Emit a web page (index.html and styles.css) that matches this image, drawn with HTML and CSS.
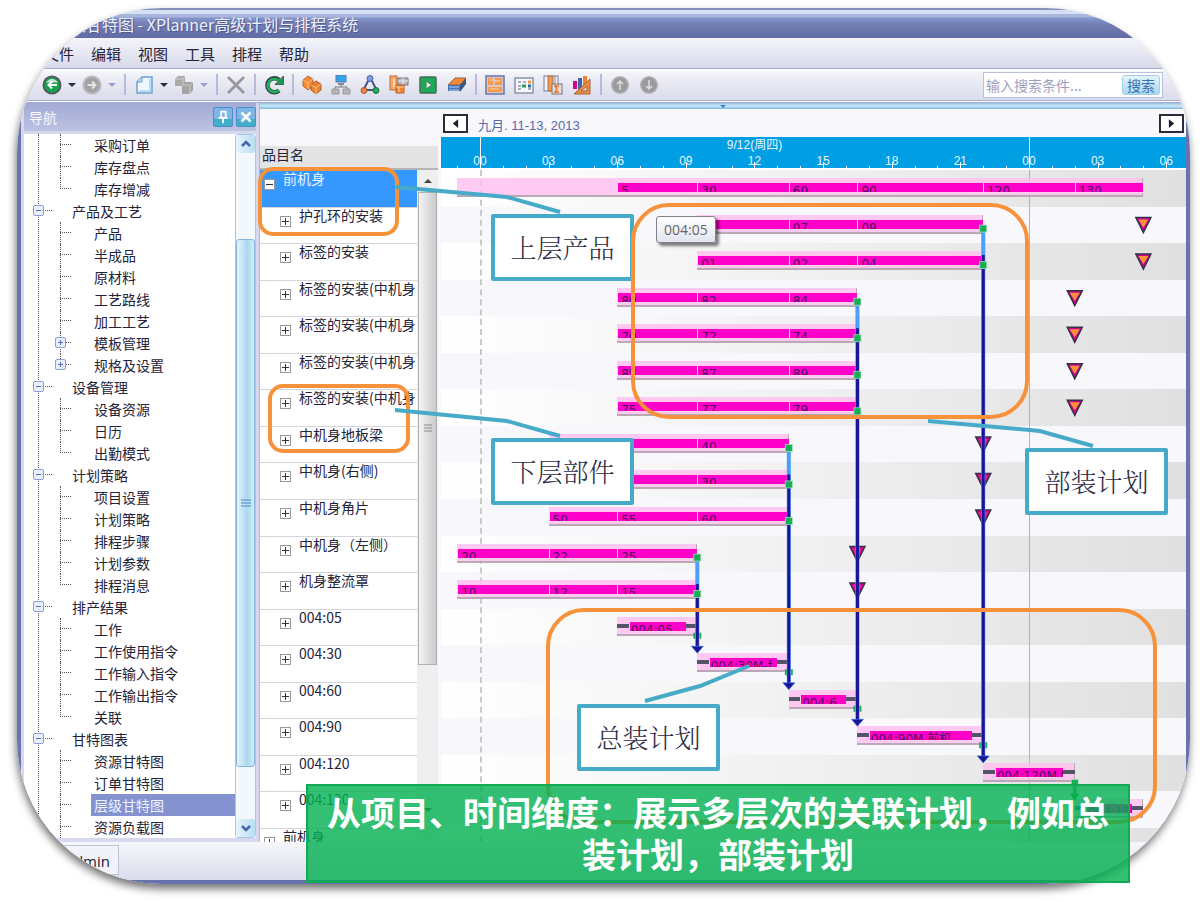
FILE: index.html
```html
<!DOCTYPE html>
<html lang="zh-CN">
<head>
<meta charset="utf-8">
<title>层级甘特图 - XPlanner高级计划与排程系统</title>
<link rel="stylesheet" href="styles.css">
</head>
<body>
<main class="slide">
  <div class="window">
    <header class="titlebar">层级甘特图 - XPlanner高级计划与排程系统</header>
    <nav class="menubar" aria-label="主菜单">
      <button class="menu">文件</button><button class="menu">编辑</button><button class="menu">视图</button><button class="menu">工具</button><button class="menu">排程</button><button class="menu">帮助</button>
    </nav>
    <div class="toolbar">
      <div class="group tight">
        <button class="tool" aria-label="后退"><svg viewBox="0 0 20 20"><circle cx="10" cy="10" r="9.5" fill="#555b63"/><circle cx="10" cy="10" r="7.500" fill="#12a34c"/><path d="M4 7.500Q10 0 16 7.500z" fill="#c6dfcf"/><path d="M15 10H7M10 6.500 6.500 10 10 13.500" fill="none" stroke="#fff" stroke-width="2"/></svg></button>
        <button class="drop" aria-label="后退列表"></button>
        <button class="tool" aria-label="前进"><svg viewBox="0 0 20 20"><circle cx="10" cy="10" r="9.500" fill="#b9b9bd"/><circle cx="10" cy="10" r="7.500" fill="#a2a2a6"/><path d="M5.500 10H13M10 6.500 13.500 10 10 13.500" fill="none" stroke="#e4e4e6" stroke-width="2"/></svg></button>
        <button class="drop dim" aria-label="前进列表"></button>
      </div>
      <i class="sep"></i>
      <div class="group tight">
        <button class="tool" aria-label="新建"><svg viewBox="0 0 20 20"><path d="M8 2h10v16H3V7z" fill="#eef7fd" stroke="#6e9fd4" stroke-width="1.500"/><path d="M8 2v5H3" fill="#b9dcf2" stroke="#6e9fd4"/><path d="M16 4v12H5" fill="none" stroke="#a9d5ee" stroke-width="1.500"/></svg></button>
        <button class="drop" aria-label="新建列表"></button>
        <button class="tool" aria-label="复制"><svg viewBox="0 0 20 20"><path d="M1 4l3-3h7v7l-2 3H1z" fill="#aaa"/><path d="M1 4h8v7M9 4l2-3" fill="none" stroke="#ccc"/><path d="M8 10l3-3h8v8l-3 4H8z" fill="#a4a4a4"/><path d="M8 10h8v9M16 10l3-3" fill="none" stroke="#ccc"/></svg></button>
        <button class="drop dim" aria-label="复制列表"></button>
      </div>
      <i class="sep"></i>
      <button class="tool" aria-label="删除"><svg viewBox="0 0 20 20"><path d="M2 2 18 18M18 2 2 18" stroke="#98989c" stroke-width="2.800"/></svg></button>
      <i class="sep"></i>
      <button class="tool" aria-label="刷新"><svg viewBox="0 0 20 20"><path d="M15 15.500A7 7 0 1 1 15 5" fill="none" stroke="#38464c" stroke-width="4.500"/><path d="M19.500 1v8.500H11z" fill="#1d9b50" stroke="#38464c" stroke-width=".8"/><path d="M15 15A6.500 6.500 0 1 1 14.500 5.500" fill="none" stroke="#1fae5a" stroke-width="2.600"/></svg></button>
      <i class="sep"></i>
      <div class="group">
        <button class="tool" aria-label="品目"><svg viewBox="0 0 20 20"><path d="M1 5 6 1l5 3v7l-5 4-5-4z" fill="#f58a33" stroke="#b46a38"/><path d="M1 5l5 3 5-4M6 8v6" fill="none" stroke="#fbc08a"/><path d="M9 10l5-4 5 3v6l-5 4-5-4z" fill="#f0812c" stroke="#a8602f"/><path d="M9 10l5 3 5-4M14 13v6" fill="none" stroke="#fbc08a"/></svg></button>
        <button class="tool" aria-label="工艺"><svg viewBox="0 0 20 20"><path d="M10 8v4M4 15v-3h12v3" fill="none" stroke="#777"/><rect x="5" y="0" width="10" height="7" fill="#32a1ee" stroke="#5d7ba5"/><path d="M7 9h6" stroke="#888" stroke-width="2"/><path d="M1 14h7v5H1zM12 14h7v5h-7z" fill="#b5b5b8" stroke="#999"/></svg></button>
        <button class="tool" aria-label="资源"><svg viewBox="0 0 20 20"><path d="M9 4 4 14M11 4l5 10M5 15h10" stroke="#475682" stroke-width="2"/><circle cx="10" cy="3.500" r="3" fill="#7c9ddd" stroke="#4a66a8"/><circle cx="4" cy="15.500" r="3" fill="#ee8240" stroke="#a65930"/><circle cx="16" cy="15.500" r="3" fill="#22aa58" stroke="#27704a"/></svg></button>
        <button class="tool" aria-label="订单"><svg viewBox="0 0 20 20"><rect x="1" y="1" width="7" height="14" fill="#f8a868" stroke="#b56c3c"/><path d="M5 4v8" stroke="#fff"/><path d="M9 3h10v7H9z" fill="#b8b8bd" stroke="#777"/><path d="M9 6h10M14 3v7" stroke="#eee"/><path d="M7 10h8v8H7z" fill="#f28730" stroke="#ad622e"/><path d="M10 12v5M7 12h8" stroke="#fbd0a0"/></svg></button>
        <button class="tool" aria-label="执行"><svg viewBox="0 0 20 20"><rect x="2" y="2" width="16" height="16" rx="1" fill="#1dab57" stroke="#44695a" stroke-width="1.500"/><path d="M8 6v8l6-4z" fill="#d6eedd" stroke="#45795d"/></svg></button>
        <button class="tool" aria-label="报表"><svg viewBox="0 0 20 20"><path d="M8 3h11l-6 7H1z" fill="#f28a38" stroke="#9d633f"/><path d="M1 10h12v6H1z" fill="#3f72ba"/><path d="M13 10l6-7v6l-6 8z" fill="#3d5681"/><path d="M2 12h10M2 15h10" stroke="#b9d6f0"/></svg></button>
      </div>
      <i class="sep"></i>
      <div class="group">
        <button class="tool" aria-label="资源甘特图"><svg viewBox="0 0 20 20"><rect x="1" y="1" width="18" height="18" fill="#dcc7c6" stroke="#6378ad" stroke-width="1.500"/><path d="M3 3h5v7H3zM10 3h7v7h-7zM3 12h14v5H3z" fill="#f69a4b"/><path d="M5 5h3M10 6h5M5 14h9" stroke="#ffd8b5"/></svg></button>
        <button class="tool" aria-label="日程表"><svg viewBox="0 0 20 20"><rect x="1" y="3" width="18" height="15" fill="#f7f7fb" stroke="#8893ab" stroke-width="1.500"/><path d="M4 7h3M9 7h3M4 11h3M14 14h3M4 14h3" stroke="#a8adbb" stroke-width="2"/><path d="M14 7h3" stroke="#f19142" stroke-width="3"/><path d="M8 11h4" stroke="#28a15c" stroke-width="3"/><path d="M14 11h3" stroke="#276f90" stroke-width="3"/></svg></button>
        <button class="tool" aria-label="汇总"><svg viewBox="0 0 20 20"><rect x="1" y="1" width="14" height="15" fill="#f5f3f5" stroke="#777d95"/><path d="M5 1h5v15H5z" fill="#f19852" stroke="#ad7048"/><path d="M12 1v8" stroke="#7b87a0"/><rect x="9" y="9" width="10" height="10" fill="#e9dde1" stroke="#777"/><path d="M16 11h-4l2 3-2 3h4" fill="none" stroke="#ec7322" stroke-width="1.500"/></svg></button>
        <button class="tool" aria-label="分析"><svg viewBox="0 0 20 20"><path d="M1 6h4v8H1z" fill="#d6008f"/><path d="M6 3h4v12H6z" fill="#4063ad"/><path d="M11 1h4v10h-4z" fill="#f28430"/><path d="M18 4v15H2z" fill="#f08b3f" stroke="#a26342"/><path d="M15 11v5h-6z" fill="#ddd9e6" stroke="#936647"/></svg></button>
      </div>
      <i class="sep"></i>
      <div class="group">
        <button class="tool" aria-label="上移"><svg viewBox="0 0 20 20"><circle cx="10" cy="10" r="9" fill="#b1b1b3"/><circle cx="10" cy="10" r="7.500" fill="#9b9b9e"/><path d="M10 15V6M7 9l3-3 3 3" fill="none" stroke="#dedee0" stroke-width="1.500"/></svg></button>
        <button class="tool" aria-label="下移"><svg viewBox="0 0 20 20"><circle cx="10" cy="10" r="9" fill="#b1b1b3"/><circle cx="10" cy="10" r="7.500" fill="#9b9b9e"/><path d="M10 5v9M7 11l3 3 3-3" fill="none" stroke="#dedee0" stroke-width="1.500"/></svg></button>
      </div>
      <form class="search">
        <input class="search-box" type="text" placeholder="输入搜索条件..." aria-label="搜索条件">
        <button class="search-go" type="button">搜索</button>
      </form>
    </div>

    <div class="workspace">
      <aside class="navpane">
        <div class="navhead">
          <span class="navtitle">导航</span>
          <button class="navbtn" aria-label="固定"><svg viewBox="0 0 20 20"><path d="M7 4h7M8 4v7M13 4v7M5 11h10M10 11v6" fill="none" stroke="#fff" stroke-width="2"/></svg></button>
          <button class="navbtn" aria-label="关闭"><svg viewBox="0 0 20 20"><path d="M5 5l10 10M15 5 5 15" stroke="#fff" stroke-width="3"/></svg></button>
        </div>
        <div class="treebox">
          <ul class="tree" id="nav-tree"></ul>
          <div class="treescroll">
            <button class="scrollbtn" aria-label="向上滚动"><svg viewBox="0 0 12 12"><path d="M2 8l4-4 4 4" fill="none" stroke="#4766b0" stroke-width="2.500"/></svg></button>
            <div class="treethumb"><svg viewBox="0 0 10 8"><path d="M0 1h10M0 4h10M0 7h10" stroke="#4e83cc"/></svg></div>
            <button class="scrollbtn" aria-label="向下滚动"><svg viewBox="0 0 12 12"><path d="M2 4l4 4 4-4" fill="none" stroke="#4766b0" stroke-width="2.500"/></svg></button>
          </div>
        </div>
      </aside>

      <section class="content">
        <div class="splitter"><svg viewBox="0 0 8 4"><path d="M0 0h8L4 4z" fill="#3f7fc4"/></svg></div>
        <div class="panes">
          <div class="items">
            <div class="itemhead">品目名</div>
            <div class="itembody">
              <ul class="itemlist" id="item-list"></ul>
              <div class="itemscroll">
                <svg class="caret" viewBox="0 0 8 4"><path d="M0 4h8L4 0z" fill="#444"/></svg>
                <div class="itemthumb"><svg viewBox="0 0 8 10"><path d="M0 1h8M0 4h8M0 7h8" stroke="#8a8a90"/></svg></div>
                <svg class="caret end" viewBox="0 0 8 4"><path d="M0 0h8L4 4z" fill="#444"/></svg>
              </div>
            </div>
          </div>
          <div class="gantt">
            <div class="range">
              <button class="page" aria-label="上一页"><svg viewBox="0 0 8 10"><path d="M7 0v10L1 5z" fill="#1d1d2b"/></svg></button>
              <span class="dates">九月. 11-13, 2013</span>
              <button class="page" aria-label="下一页"><svg viewBox="0 0 8 10"><path d="M1 0v10l6-5z" fill="#1d1d2b"/></svg></button>
            </div>
            <div class="axis" id="time-axis"></div>
            <div class="chart" id="gantt-chart">
              <svg class="links" viewBox="0 0 745 672" preserveAspectRatio="none" id="gantt-links"></svg>
            </div>
          </div>
        </div>
      </section>
    </div>
    <footer class="status"><span class="user">Admin</span></footer>
  </div>

  <div class="hint">004:05</div>
  <div class="callout upper">上层产品</div>
  <div class="callout lower">下层部件</div>
  <div class="callout final">总装计划</div>
  <div class="callout part">部装计划</div>
  <svg class="marks" viewBox="0 0 1200 902">
    <g fill="none" stroke="#f7923a" stroke-width="4">
      <rect x="260" y="169" width="137" height="65" rx="13"/>
      <rect x="270" y="386" width="138" height="65" rx="13"/>
      <rect x="633" y="205" width="394" height="212" rx="36"/>
      <rect x="548" y="610" width="607" height="212" rx="36"/>
    </g>
    <g fill="none" stroke="#46aac8" stroke-width="4">
      <path d="M396 187 507 197 560 212"/>
      <path d="M395 410 507 421 560 436"/>
      <path d="M928 421 1040 431 1093 446"/>
      <path d="M645 701 700 686 749 666"/>
    </g>
  </svg>
  <p class="banner">从项目、时间维度：展示多层次的关联计划，例如总装计划，部装计划</p>
</main>
<script src="app.js"></script>
</body>
</html>
```

FILE: styles.css
```css
* { box-sizing: border-box; }
body {
  margin: 0;
  background: #fff;
  color: #23233a;
  font: 14px/20px "Noto Sans CJK SC", sans-serif;
}
button, input { font: inherit; color: inherit; margin: 0; padding: 0; border: 0; background: none; }
svg { display: block; }
ul { list-style: none; margin: 0; padding: 0; }

.slide { position: relative; padding: 8px 10px 18px 17px; }
.window {
  isolation: isolate;
  overflow: hidden;
  border-radius: 145px;
  background: #f0f0f8;
  box-shadow: -1px 5px 9px rgba(0, 0, 0, .55);
}

.titlebar {
  height: 30px;
  padding: 3px 0 0 37px;
  border-top: 2px solid #8490ba;
  background: linear-gradient(#d3e0f4 0 4px, #a9b5db 4px 7px, #8496cc 8px, #7480b4 14px, #626ca6 27px);
  color: #eef0fb;
  font-size: 16px;
  line-height: 22px;
  text-shadow: 1px 1px 1px #4b558f;
  white-space: nowrap;
}
.menubar {
  display: flex;
  gap: 17px;
  height: 31px;
  padding: 0 0 0 27px;
  background: linear-gradient(#f4f4fa, #d8daea);
  border-bottom: 1px solid #a5a9d4;
}
.menu { font-size: 15px; line-height: 32px; }
.toolbar {
  display: flex;
  align-items: center;
  height: 34px;
  padding: 0 27px 0 25px;
  background: linear-gradient(#fff, #f1f1f8 5px, #dcdeec 28px);
  border-bottom: 3px double #a9acd6;
}
.group { display: flex; align-items: center; gap: 9px; }
.group.tight { gap: 6px; }
.tool, .tool svg { width: 20px; height: 20px; }
.drop { width: 8px; height: 20px; display: flex; align-items: center; }
.drop::before { content: ""; border: 4px solid transparent; border-top-color: #2b2b3b; border-bottom: 0; }
.drop.dim::before { border-top-color: #9aa2d4; }
.sep { width: 2px; height: 21px; margin: 0 8px; background: #b7badc; }
.search {
  display: flex;
  align-items: center;
  width: 180px;
  height: 26px;
  margin-left: auto;
  padding: 2px;
  border: 1px solid #b9bde0;
  background: #fff;
}
.search-box { flex: 1; min-width: 0; outline: 0; }
.search-box::placeholder { color: #9c9fc0; opacity: 1; }
.search-go {
  width: 38px;
  height: 20px;
  line-height: 18px;
  border: 1px solid #a3cfea;
  border-radius: 3px;
  background: linear-gradient(#e6f4fc, #a6d8f0);
  color: #3d6fae;
}

.workspace { display: flex; border: solid #6874ae; border-width: 0 4px; background: #f8f8fc; }
.navpane {
  width: 239px;
  flex: none;
  display: flex;
  flex-direction: column;
  padding: 0 3px 4px;
  background: #d6d8ee;
  border-right: 1px solid #b3b5dc;
}
.navhead {
  display: flex;
  align-items: center;
  gap: 3px;
  height: 28px;
  padding: 0 0 0 5px;
  background: linear-gradient(#a2aad6, #bcc2e2);
}
.navtitle { flex: 1; color: #f8f8ff; }
.navbtn { width: 20px; height: 20px; border: 1px solid #4c8dcb; border-radius: 2px; background: linear-gradient(#7db5e6 60%, #42adc9 60%); }
.treebox { display: flex; margin-top: 3px; background: #fff; height: 704px; overflow: hidden; }
.tree { flex: 1; position: relative; padding-left: 11px; }
.tree::before { content: ""; position: absolute; left: 14px; top: 0; bottom: 0; border-left: 1px dotted #555; }
.row { display: flex; align-items: center; height: 22px; line-height: 22px; white-space: nowrap; }
.root { position: relative; padding-left: 37px; }
.root::before { content: ""; position: absolute; left: 10px; top: 10px; width: 7px; border-top: 1px dotted #555; }
.leaf { position: relative; padding-left: 59px; }
.leaf::before { content: ""; position: absolute; left: 25px; top: 10px; width: 11px; border-top: 1px dotted #555; }
.leaf::after { content: ""; position: absolute; left: 25px; top: 0; bottom: 0; border-left: 1px dotted #555; }
.leaf.last::after { bottom: 11px; }
.leaf .text { flex: 1; }
.leaf.current .text { background: #8492cf; color: #eef4ff; margin-left: -3px; padding-left: 3px; }
.knob {
  position: absolute;
  z-index: 1;
  left: -2px;
  top: 5px;
  width: 11px;
  height: 11px;
  border: 1px solid #8b9fd8;
  border-radius: 2px;
  background: linear-gradient(#5a70b8, #5a70b8) center / 5px 1px no-repeat, #e8eefb;
}
.leaf .knob { left: 20px; background: linear-gradient(#5a70b8, #5a70b8) center / 5px 1px no-repeat, linear-gradient(#5a70b8, #5a70b8) center / 1px 5px no-repeat, #e8eefb; }
.treescroll { display: flex; flex-direction: column; width: 21px; background: #f3f8fd; border: 1px solid #a7c8ea; border-radius: 3px; }
.scrollbtn { display: grid; place-items: center; height: 18px; border-radius: 3px; background: linear-gradient(90deg, #e6f4fc, #b6def1); }
.scrollbtn svg { width: 12px; height: 12px; }
.treethumb { flex: 1; display: grid; place-items: center; margin: 86px 0 52px; border: 1px solid #86b5e2; border-radius: 3px; background: linear-gradient(90deg, #e4f4fb, #a9d8ec 60%, #d4edf8); }
.treethumb svg { width: 10px; height: 8px; }

.content { flex: 1; min-width: 0; display: flex; flex-direction: column; }
.splitter { display: grid; place-items: center; height: 6px; background: linear-gradient(#8fc1e6, #cfeaf8 3px, #79b6e2); }
.splitter svg { width: 6px; height: 3px; }
.panes { flex: 1; display: flex; }
.items { display: flex; flex-direction: column; width: 178px; flex: none; padding-top: 37px; }
.itemhead { height: 24px; padding-left: 2px; line-height: 17px; background: #e3e3e3; border-bottom: 2px solid #b5b5b8; }
.itembody { flex: 1; display: flex; }
.itemlist, .chart { display: grid; grid-template-rows: repeat(18, 1fr) 14px; height: 672px; }
.itemlist { flex: 1; min-width: 0; background: #fff; }
.item { position: relative; overflow: hidden; min-height: 0; padding-left: 39px; border-top: 1px solid #d5d5d8; white-space: nowrap; line-height: 14px; }
.item.top { padding-left: 23px; }
.item.current { background: #3598ff; color: #e8f3ff; border-top-color: #3598ff; }
.box {
  position: absolute;
  left: 20px;
  top: 8px;
  width: 11px;
  height: 11px;
  border: 1px solid #999;
  background: linear-gradient(#333, #333) center / 7px 1px no-repeat, linear-gradient(#333, #333) center / 1px 7px no-repeat, #fff;
}
.item.top .box { left: 4px; }
.item.current .box { background: linear-gradient(#333, #333) center / 7px 1px no-repeat, #fff; }
.itemscroll { display: flex; flex-direction: column; align-items: center; width: 21px; background: #efeff0; }
.caret { width: 8px; height: 4px; margin: 9px 0; }
.caret.end { margin-top: auto; margin-bottom: 30px; }
.itemthumb { display: grid; place-items: center; width: 19px; height: 473px; border: 1px solid #b0b0b2; background: linear-gradient(90deg, #f4f4f4, #dedfe0 50%, #c9cacb); }
.itemthumb svg { width: 8px; height: 10px; }

.gantt { flex: 1; min-width: 0; margin-left: 3px; display: flex; flex-direction: column; }
.range { display: flex; align-items: center; height: 28px; padding: 0 2px; }
.page { display: grid; place-items: center; width: 25px; height: 19px; border: 2px solid #2b2b3b; background: #fff; }
.page svg { width: 7px; height: 9px; }
.dates { flex: 1; padding: 6px 0 0 10px; color: #5868ab; font: 13px/20px "Liberation Sans", "Noto Sans CJK SC", sans-serif; }
.axis { position: relative; height: 33px; background: #009ee2; border-bottom: 2px solid #fff; color: #e6f6ff; font: 12px/14px "Liberation Sans", "Noto Sans CJK SC", sans-serif; overflow: hidden; }
.tick { position: absolute; bottom: 0; height: 2px; border-left: 1px solid #fff; }
.tick.major { height: 6px; }
.tick.day { height: 33px; }
.hour { position: absolute; top: 17px; width: 20px; margin-left: -10px; text-align: center; }
.day-name { position: absolute; top: 1px; width: 80px; margin-left: -40px; text-align: center; }

.chart { position: relative; overflow: hidden; }
.lane { position: relative; min-height: 0; background: #f8f8fc; }
.lane:nth-of-type(odd) { background: linear-gradient(90deg, #fff, #f0f0f0 50%, #e0e0e0); }
.daybreak { position: absolute; z-index: 1; top: 0; bottom: 0; border-left: 1px solid #b4b4b4; }
.daybreak.dashed { border-left: 2px dashed #cacaca; }
.links { position: absolute; z-index: 3; inset: 0; width: 100%; height: 100%; }
.span { position: absolute; z-index: 2; top: 8px; height: 19px; background: rgba(255, 190, 240, .8); border: solid #b9a9b4; border-width: 0 1px 2px 0; }
.seg {
  position: absolute;
  z-index: 2;
  top: 13px;
  height: 10px;
  overflow: hidden;
  padding-left: 3px;
  background: #ff00c8;
  border: solid #f3d3ea;
  border-width: 0 0 1px 1px;
  color: #4b0c5c;
  font: 12px/16px "DejaVu Sans", "Noto Sans CJK SC", sans-serif;
  white-space: nowrap;
}
.seg.work { padding-left: 1px; }
.stub { position: absolute; z-index: 2; top: 15px; height: 4px; background: #525566; }

.status { height: 42px; display: flex; padding: 3px 0 5px; background: linear-gradient(#f6f6fb, #d9dcea); border-bottom: 4px solid #6672ac; }
.user { width: 102px; padding: 0 8px 0 0; text-align: right; border: 1px solid #c2c4dc; background: #f2f2fa; font: 15px/30px "Open Sans", sans-serif; }

.hint {
  position: absolute;
  left: 656px;
  top: 216px;
  padding: 0 7px;
  border: 1px solid #808088;
  border-radius: 3px;
  background: linear-gradient(#fff, #e2e4f0);
  box-shadow: 3px 3px 3px rgba(0, 0, 0, .5);
  color: #666;
  font: 14px/25px "Open Sans", sans-serif;
}
.callout {
  position: absolute;
  width: 143px;
  padding: 15px 0 16px;
  border: 4px solid #46aac8;
  border-radius: 2px;
  background: #fff;
  text-align: center;
  color: #2b2b44;
  font: 300 26px/28px "Noto Serif CJK SC", "Noto Sans CJK SC", sans-serif;
}
.callout.upper { left: 491px; top: 214px; }
.callout.lower { left: 491px; top: 438px; }
.callout.final { left: 577px; top: 704px; }
.callout.part { left: 1025px; top: 448px; }
.marks { position: absolute; left: 0; top: 0; width: 1200px; height: 902px; pointer-events: none; }
.banner {
  position: absolute;
  left: 306px;
  top: 784px;
  width: 824px;
  margin: 0;
  padding: 5px 16px 6px;
  border: 2px solid #14a953;
  background: rgba(0, 176, 80, .8);
  color: #fff;
  font: bold 34px/42px "Noto Sans CJK SC", sans-serif;
  text-align: center;
}
```

FILE: app.js
```js
const branches = [
  [null, ["采购订单", "库存盘点", "库存增减"]],
  ["产品及工艺", ["产品", "半成品", "原材料", "工艺路线", "加工工艺", "+模板管理", "+规格及设置"]],
  ["设备管理", ["设备资源", "日历", "出勤模式"]],
  ["计划策略", ["项目设置", "计划策略", "排程步骤", "计划参数", "排程消息"]],
  ["排产结果", ["工作", "工作使用指令", "工作输入指令", "工作输出指令", "关联"]],
  ["甘特图表", ["资源甘特图", "订单甘特图", "层级甘特图", "资源负载图"]]
];
const currentLeaf = "层级甘特图";

document.getElementById("nav-tree").innerHTML = branches.map(([title, leaves], b) => {
  const head = title ? `<div class="row root"><i class="knob"></i>${title}</div>` : "";
  const rows = leaves.map((leaf, i) => {
    const folded = leaf[0] === "+";
    const text = folded ? leaf.slice(1) : leaf;
    const last = i === leaves.length - 1 && b < branches.length - 1 ? " last" : "";
    return `<div class="row leaf${last}${text === currentLeaf ? " current" : ""}">${folded ? '<i class="knob"></i>' : ""}<span class="text">${text}</span></div>`;
  }).join("");
  return `<li>${head}${rows}</li>`;
}).join("");

const itemNames = ["前机身", "护孔环的安装", "标签的安装", "标签的安装(中机身", "标签的安装(中机身", "标签的安装(中机身",
  "标签的安装(中机身", "中机身地板梁", "中机身(右侧)", "中机身角片", "中机身（左侧）", "机身整流罩",
  "004:05", "004:30", "004:60", "004:90", "004:120", "004:130", "前机身"];
document.getElementById("item-list").innerHTML = itemNames.map((text, i) =>
  `<li class="item${i === 0 || i === 18 ? " top" : ""}${i === 0 ? " current" : ""}"><i class="box"></i>${text}</li>`).join("");

// The visible window starts 1.7 hours before midnight and is 32.57 hours wide.
const leftOf = h => (h + 1.705) / 32.57 * 100 + "%";
const widthOf = h => h / 32.57 * 100 + "%";

let axis = `<span class="day-name" style="left:${leftOf(12)}">9/12(周四)</span>`;
for (let h = -1; h <= 30; h++) {
  const kind = h % 24 === 0 ? " day" : h % 3 === 0 ? " major" : "";
  axis += `<i class="tick${kind}" style="left:${leftOf(h)}"></i>`;
  if (h % 3 === 0) axis += `<span class="hour" style="left:${leftOf(h)}">${String(h % 24).padStart(2, "0")}</span>`;
}
document.getElementById("time-axis").innerHTML = axis;

// Each lane: start, end, then [hour, label] operations; or a single work label.
const lanes = [
  [-1, 29, [[6, "5"], [9.5, "30"], [13.5, "60"], [16.5, "90"], [22, "120"], [26, "130"]]],
  [9.5, 22, [[9.5, "05"], [13.5, "07"], [16.5, "09"]]],
  [9.5, 22, [[9.5, "01"], [13.5, "02"], [16.5, "04"]]],
  [6, 16.5, [[6, "80"], [9.5, "82"], [13.5, "84"]]],
  [6, 16.5, [[6, "70"], [9.5, "72"], [13.5, "74"]]],
  [6, 16.5, [[6, "85"], [9.5, "87"], [13.5, "89"]]],
  [6, 16.5, [[6, "75"], [9.5, "77"], [13.5, "79"]]],
  [3, 13.5, [[3, "35"], [6, ""], [9.5, "40"]]],
  [3, 13.5, [[3, "25"], [6, ""], [9.5, "30"]]],
  [3, 13.5, [[3, "50"], [6, "55"], [9.5, "60"]]],
  [-1, 9.5, [[-1, "20"], [3, "22"], [6, "25"]]],
  [-1, 9.5, [[-1, "10"], [3, "12"], [6, "15"]]],
  [6, 9.5, "004:05"], [9.5, 13.5, "004:30M-f"], [13.5, 16.5, "004:6"],
  [16.5, 22, "004:90M 前机"], [22, 26, "004:120M f"], [26, 29, "004:130"], []
];
document.getElementById("gantt-chart").insertAdjacentHTML("beforeend", lanes.map(([a, b, ops]) => {
  if (!ops) return '<div class="lane"></div>';
  let html = `<i class="span" style="left:${leftOf(a)};width:${widthOf(b - a)}"></i>`;
  if (typeof ops === "string") {
    html += `<i class="stub" style="left:${leftOf(a)};width:${widthOf(0.5)}"></i><i class="stub" style="left:${leftOf(b - 0.5)};width:${widthOf(0.5)}"></i>`;
    html += `<span class="seg work" style="left:${leftOf(a + 0.5)};width:${widthOf(b - a - 1)}">${ops}</span>`;
  } else {
    ops.forEach(([h, label], i) => {
      const end = i + 1 < ops.length ? ops[i + 1][0] : b;
      html += `<span class="seg" style="left:${leftOf(h)};width:${widthOf(end - h)}">${label}</span>`;
    });
  }
  return `<div class="lane">${html}</div>`;
}).join("") + `<i class="daybreak dashed" style="left:${leftOf(0)}"></i><i class="daybreak" style="left:${leftOf(24)}"></i>`);

const hourX = h => (h + 1.705) * 22.875;
const laneY = r => r * 36.555;
let shapes = "";
const due = [[29, 1, 2], [26, 3, 6], [22, 7, 9], [16.5, 10, 11]];
due.forEach(([h, from, to]) => {
  for (let r = from; r <= to; r++) {
    const fill = h < 26 ? "#e0209a" : "#fb923a";
    const place = `translate(${hourX(h)} ${laneY(r) + 10})`;
    shapes += `<path transform="${place}" d="M-7.500 1H7.500L0 16z" fill="#d6008f" stroke="#33334a" stroke-width="1.500"/>`;
    shapes += `<path transform="${place}" d="M-5 3H5L0 11z" fill="${fill}"/>`;
  }
});
// Link: hour, first lane, last lane feeding it, lane it points to.
[[22, 1, 2, 16], [16.5, 3, 6, 15], [13.5, 7, 9, 14], [9.5, 10, 11, 13], [26, 16, 16, 17]].forEach(([h, a, b, to]) => {
  const c = hourX(h), y0 = laneY(a) + 22, y1 = laneY(a + 1) + 12, y2 = laneY(to) + 2;
  if (a === b) {
    shapes += `<path d="M${c} ${laneY(a) + 28}V${y2 + 6}" stroke="#12a852" stroke-width="3"/><path d="M${c - 5} ${y2}h10l-5 7z" fill="#12a852"/>`;
  } else {
    shapes += `<path d="M${c} ${y0}V${y2}" stroke="#4aa0f8" stroke-width="4"/><path d="M${c} ${y1}V${y2}" stroke="#1c1498" stroke-width="3"/>`;
    shapes += `<path d="M${c - 6} ${y2 - 1}h12l-6 7z" fill="#1c1498" stroke="#3a78e0" stroke-width=".7"/>`;
    shapes += `<path d="M${c - 3} ${laneY(to - 1) + 24}v6M${c + 3} ${laneY(to - 1) + 24}v6" stroke="#18b060" stroke-width="2"/>`;
  }
  for (let r = a; r <= b; r++) {
    const y = laneY(r) + (a === b ? 28 : 22);
    shapes += `<rect x="${c - 3.5}" y="${y - 3.5}" width="7" height="7" fill="#12b052" stroke="#a9d8bc" stroke-width=".8"/>`;
  }
});
document.getElementById("gantt-links").innerHTML = shapes;
```
